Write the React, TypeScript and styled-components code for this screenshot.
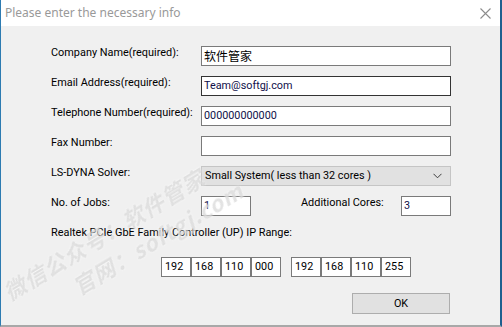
import styled, { createGlobalStyle } from "styled-components";

const GlobalStyle = createGlobalStyle`
  html, body {
    margin: 0;
    padding: 0;
    background: #ffffff;
  }
  * {
    box-sizing: border-box;
  }
`;

const UI_FONT = `Roboto, "Noto Sans CJK SC", sans-serif`;

export default function App() {
  return (
    <>
      <GlobalStyle />
      <Window>
        <TitleBar>
          <Title>Please enter the necessary info</Title>
          <CloseButton>
            <svg width="11" height="11" viewBox="0 0 11 11">
              <path d="M0.5 0.5 L10.5 10.5 M10.5 0.5 L0.5 10.5" stroke="#8c8c8c" strokeWidth="1.1" fill="none" />
            </svg>
          </CloseButton>
        </TitleBar>

        <Body>
          <Row>
            <Label>Company Name(required):</Label>
            <TextBox>
              <CjkText>软件管家</CjkText>
            </TextBox>
          </Row>
          <Row>
            <Label>Email Address(required):</Label>
            <TextBox $focused>Team@softgj.com</TextBox>
          </Row>
          <Row>
            <Label>Telephone Number(required):</Label>
            <TextBox>000000000000</TextBox>
          </Row>
          <Row>
            <Label>Fax Number:</Label>
            <TextBox />
          </Row>
          <Row>
            <Label>LS-DYNA Solver:</Label>
            <Combo>
              <span>Small System( less than 32 cores )</span>
              <svg width="9" height="6" viewBox="0 0 9 6">
                <path d="M0.5 0.8 L4.5 4.8 L8.5 0.8" stroke="#3c3c3c" strokeWidth="1" fill="none" />
              </svg>
            </Combo>
          </Row>
          <Row>
            <Label>No. of Jobs:</Label>
            <TextBox $width={50}>1</TextBox>
            <Label $width={100} $offset={50}>Additional Cores:</Label>
            <TextBox $width={50}>3</TextBox>
          </Row>
          <Caption>Realtek PCIe GbE Family Controller (UP) IP Range:</Caption>

          <IpRow>
            <IpGroup>
              <IpCell>192</IpCell>
              <IpCell>168</IpCell>
              <IpCell>110</IpCell>
              <IpCell>000</IpCell>
            </IpGroup>
            <IpGroup>
              <IpCell>192</IpCell>
              <IpCell>168</IpCell>
              <IpCell>110</IpCell>
              <IpCell>255</IpCell>
            </IpGroup>
          </IpRow>

          <ButtonRow>
            <OkButton>OK</OkButton>
          </ButtonRow>
        </Body>

        <Watermark>
          <span>微信公众号：软件管家</span>
          <span className="second">官网：softgj.com</span>
        </Watermark>
      </Window>
    </>
  );
}

const Window = styled.div`
  position: relative;
  width: 502px;
  height: 327px;
  overflow: hidden;
  display: flex;
  flex-direction: column;
  background: #f0f0f0;
  border-left: 1px solid #2d7bb1;
  border-right: 2px solid #1f5f8f;
  border-bottom: 2px solid #a8a8a8;
  font-family: ${UI_FONT};
`;

const TitleBar = styled.div`
  height: 26px;
  flex: none;
  display: flex;
  align-items: center;
  justify-content: space-between;
  background: #ffffff;
  padding: 0 9px 0 4px;
`;

const Title = styled.div`
  font-family: "Noto Sans", sans-serif;
  font-size: 12px;
  color: #999999;
  line-height: 16px;
`;

const CloseButton = styled.div`
  width: 11px;
  height: 11px;
  display: flex;
`;

const Body = styled.div`
  flex: 1;
  display: flex;
  flex-direction: column;
  gap: 10px;
  padding: 20px 0 0 50px;
  font-size: 10.9px;
  color: #000000;
`;

const Row = styled.div`
  display: flex;
  align-items: flex-start;
  height: 20px;
`;

const Label = styled.div<{ $width?: number; $offset?: number }>`
  width: ${(p) => p.$width ?? 150}px;
  margin-left: ${(p) => p.$offset ?? 0}px;
  line-height: 14px;
  white-space: nowrap;
`;

const TextBox = styled.div<{ $width?: number; $focused?: boolean }>`
  width: ${(p) => p.$width ?? 250}px;
  height: 20px;
  background: #ffffff;
  border: 1px solid ${(p) => (p.$focused ? "#333333" : "#7a7a7a")};
  padding: 0 2px;
  line-height: 18px;
  font-size: 10.8px;
  white-space: nowrap;
  color: #10104a;
`;

const CjkText = styled.span`
  font-family: "Noto Sans CJK SC", sans-serif;
  font-size: 12px;
  color: #000000;
`;

const Combo = styled.div`
  width: 250px;
  height: 20px;
  display: flex;
  align-items: center;
  justify-content: space-between;
  background: #e1e1e1;
  border: 1px solid #c5c5c5;
  padding: 0 8px 0 3px;
  line-height: 18px;
  font-size: 10.8px;
`;

const Caption = styled.div`
  line-height: 14px;
  height: 14px;
  white-space: nowrap;
`;

const IpRow = styled.div`
  display: flex;
  gap: 10px;
  margin: 7px 0 0 110px;
`;

const IpGroup = styled.div`
  display: flex;
`;

const IpCell = styled.div`
  width: 30px;
  height: 20px;
  background: #ffffff;
  border: 1px solid #7a7a7a;
  padding: 0 3px;
  line-height: 18px;
  font-size: 10.8px;
`;

const ButtonRow = styled.div`
  display: flex;
  justify-content: flex-end;
  padding-right: 50px;
  margin-top: 6px;
`;

const OkButton = styled.div`
  width: 98px;
  height: 21px;
  display: flex;
  align-items: center;
  justify-content: center;
  background: #e1e1e1;
  border: 1px solid #adadad;
  font-size: 10.8px;
`;

const Watermark = styled.div`
  position: absolute;
  left: -4px;
  top: 280px;
  transform: rotate(-31deg);
  transform-origin: 0 0;
  display: flex;
  flex-direction: column;
  pointer-events: none;
  font-family: "Noto Sans CJK SC", sans-serif;
  font-size: 22px;
  font-weight: 700;
  font-style: italic;
  line-height: 31px;
  letter-spacing: 1px;
  white-space: nowrap;
  color: rgba(140, 140, 140, 0.24);
  filter: blur(0.5px);
  text-shadow: 0 0 2px rgba(255, 255, 255, 0.9);

  .second {
    margin-left: 62px;
  }
`;
